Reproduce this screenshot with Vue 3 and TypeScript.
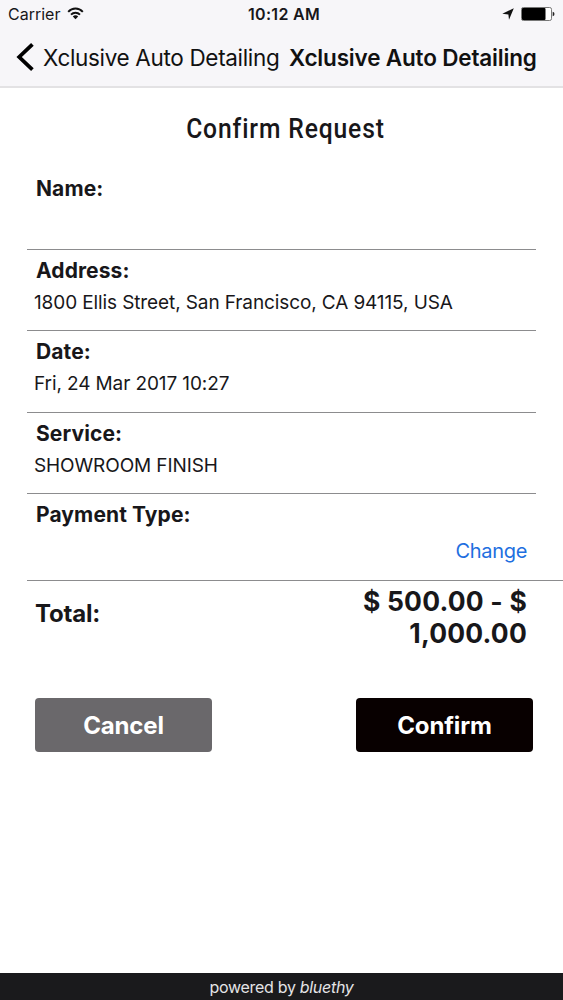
<script setup lang="ts">
interface Field {
  label: string
  value: string
}

const business = 'Xclusive Auto Detailing'
const fields: Field[] = [
  { label: 'Name:', value: '' },
  { label: 'Address:', value: '1800 Ellis Street, San Francisco, CA 94115, USA' },
  { label: 'Date:', value: 'Fri, 24 Mar 2017 10:27' },
  { label: 'Service:', value: 'SHOWROOM FINISH' },
]
</script>

<template>
  <div class="screen">
    <header class="top">
      <div class="status">
        <div class="carrier">
          <span class="carrier-name">Carrier</span>
          <svg class="wifi" width="17" height="13" viewBox="0 0 17 13" fill="none" stroke="#111" stroke-width="1.9">
            <path d="M1.2 4.8 C5.2 .4 11.8 .4 15.8 4.8" />
            <path d="M4 7.7 C6.5 5 10.5 5 13 7.7" />
            <path d="M8.5 12.2 L5.8 9.4 C7.3 8 9.7 8 11.2 9.4 Z" fill="#111" stroke="none" />
          </svg>
        </div>
        <span class="clock">10:12 AM</span>
        <div class="indicators">
          <svg width="12" height="12" viewBox="0 0 12 12"><path d="M11.8 .2 L7 11.8 L6.4 6.4 L.3 5.8 Z" fill="#111" /></svg>
          <svg width="34" height="14" viewBox="0 0 34 14">
            <rect x=".5" y=".5" width="30" height="13" rx="1.8" fill="#fff" stroke="#777" />
            <rect x="1" y="1" width="23.5" height="12" rx="1" fill="#000" />
            <path d="M31.7 4.8 Q33.5 5.3 33.5 7 Q33.5 8.7 31.7 9.2 Z" fill="#222" />
          </svg>
        </div>
      </div>
      <nav class="nav">
        <svg class="chevron" width="18" height="28" viewBox="0 0 18 28" fill="none" stroke="#000" stroke-width="3.8">
          <path d="M16.4 1.4 L3.2 14 L16.4 26.6" />
        </svg>
        <span class="back">{{ business }}</span>
        <span class="current">{{ business }}</span>
      </nav>
    </header>

    <main class="content">
      <h1 class="title">Confirm Request</h1>
      <section v-for="field in fields" :key="field.label" class="field">
        <div class="label">{{ field.label }}</div>
        <div class="value">{{ field.value }}</div>
      </section>
      <section class="payment">
        <div class="label">Payment Type:</div>
        <a class="change">Change</a>
      </section>
      <section class="total">
        <span class="total-label">Total:</span>
        <span class="amount">$ 500.00 - $<br />1,000.00</span>
      </section>
      <div class="actions">
        <button class="button cancel">Cancel</button>
        <button class="button confirm">Confirm</button>
      </div>
    </main>

    <footer class="footer"><span>powered by <em>bluethy</em></span></footer>
  </div>
</template>

<style>
body {
  margin: 0;
}
</style>

<style scoped>
.screen {
  display: flex;
  flex-direction: column;
  width: 563px;
  height: 1000px;
  overflow: hidden;
  background: #fff;
  color: #18171a;
  font-family: Inter, "Liberation Sans", sans-serif;
  white-space: nowrap;
}
.top {
  box-sizing: border-box;
  height: 88px;
  background: #f7f6f9;
  border-bottom: 2px solid #e3e2e4;
}
.status {
  display: grid;
  grid-template-columns: 1fr auto 1fr;
  align-items: center;
  height: 28px;
  padding: 0 8px;
  font-size: 16px;
}
.carrier {
  display: flex;
  align-items: center;
  gap: 7px;
}
.wifi {
  margin-top: -2px;
}
.clock {
  margin-left: 5px;
  font-weight: 600;
  letter-spacing: 0.3px;
}
.indicators {
  display: flex;
  align-items: center;
  justify-content: flex-end;
  gap: 7px;
}
.nav {
  display: flex;
  align-items: center;
  height: 58px;
  padding-left: 16px;
  font-size: 22.5px;
  color: #111;
}
.back {
  width: 236px;
  margin-left: 9px;
  letter-spacing: -0.33px;
}
.current {
  margin-left: 10px;
  font-weight: 600;
  letter-spacing: -0.17px;
}
.content {
  flex: 1;
}
.title {
  height: 82px;
  margin: 0 0 0 8px;
  font: 500 28px/82px Roboto, sans-serif;
  letter-spacing: 1px;
  text-align: center;
  transform: scaleX(0.88);
}
.field {
  box-sizing: border-box;
  height: 81.5px;
  margin: 0 27px;
  padding: 8px 0 0 7px;
  border-bottom: 1px solid #8c8c8e;
}
.field:first-of-type {
  height: 79.5px;
  padding-top: 6px;
}
.label {
  padding-left: 2px;
  font-size: 21px;
  font-weight: 700;
  line-height: 26px;
  letter-spacing: 0.1px;
}
.value {
  margin-top: 6px;
  font-size: 19px;
  line-height: 26px;
  letter-spacing: -0.11px;
}
.payment {
  box-sizing: border-box;
  height: 87px;
  margin-left: 27px;
  padding: 8px 36px 0 7px;
  border-bottom: 1px solid #8c8c8e;
}
.change {
  display: block;
  margin-top: 10px;
  font-size: 20px;
  line-height: 26px;
  letter-spacing: -0.3px;
  text-align: right;
  color: #1e6fe0;
}
.total {
  display: flex;
  justify-content: space-between;
  height: 117px;
  padding: 0 36px 0 35px;
  font-weight: 700;
}
.total-label {
  font-size: 24px;
  line-height: 65px;
  letter-spacing: -0.2px;
}
.amount {
  padding-top: 4px;
  font-size: 26.5px;
  line-height: 32px;
  letter-spacing: 0.2px;
  text-align: right;
}
.actions {
  display: flex;
  justify-content: space-between;
  padding: 0 30px 0 35px;
}
.button {
  width: 177px;
  height: 54px;
  padding: 0;
  border: 0;
  border-radius: 4px;
  color: #fff;
  font: 700 24px/55px Inter, sans-serif;
  letter-spacing: -0.15px;
}
.cancel {
  background: #6a686b;
}
.confirm {
  background: #080000;
}
.footer {
  height: 27px;
  background: #1a1a1c;
  color: #e4e4e6;
  font-size: 16px;
  line-height: 28px;
  letter-spacing: -0.3px;
  text-align: center;
}
</style>
